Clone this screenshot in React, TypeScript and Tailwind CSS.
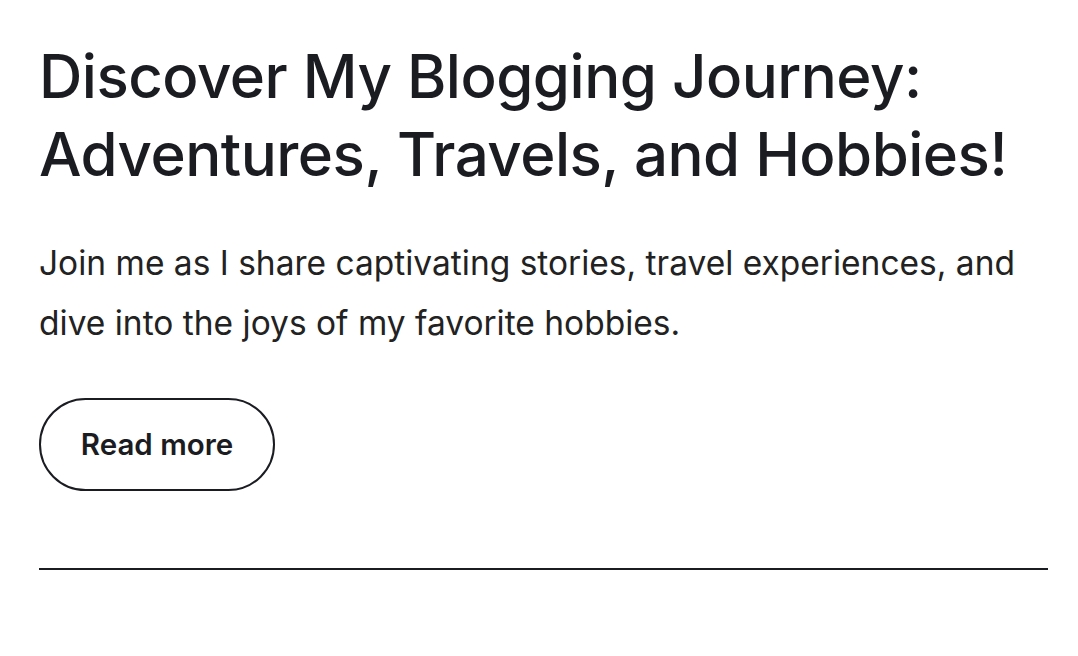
export default function App() {
  return (
    <div className="min-h-[656px] w-full bg-white font-['Inter','Noto_Sans',sans-serif] text-[#1b1c22]">
      <div className="pl-[39px] pr-[30px] pt-[37px]">
        <h1 className="text-[60px] font-medium leading-[78px] tracking-[-0.5px]">
          Discover My Blogging Journey: Adventures, Travels, and Hobbies!
        </h1>
        <p className="mt-[40px] text-[33.5px] leading-[60px] text-[#222]">
          Join me as I share captivating stories, travel experiences, and dive into the joys of my favorite hobbies.
        </p>
        <button className="mt-[45px] flex h-[93px] w-[236px] items-center justify-center rounded-full border-2 border-[#1b1c22] text-[29.5px] font-semibold">
          Read more
        </button>
        <div className="mt-[77px] h-[2px] w-[1009px] bg-[#1b1c22]" />
      </div>
    </div>
  )
}
